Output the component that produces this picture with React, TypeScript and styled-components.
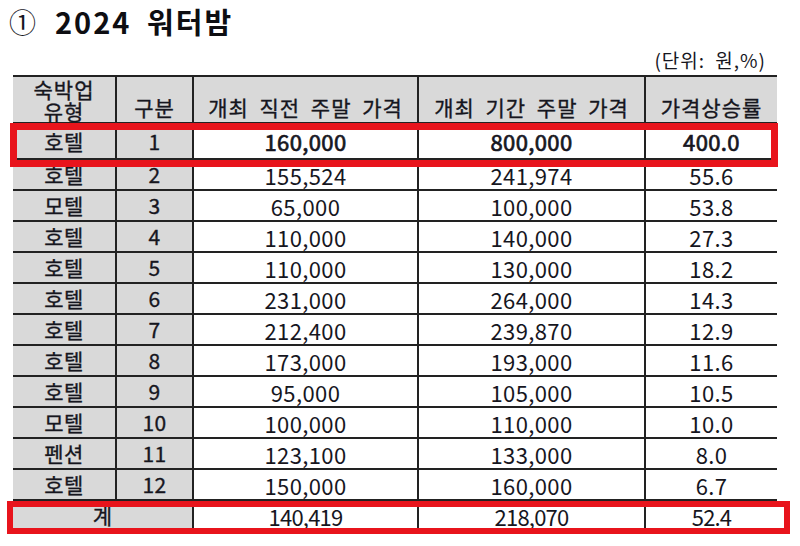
import styled, { createGlobalStyle } from 'styled-components';

const GlobalStyle = createGlobalStyle`
  html, body {
    margin: 0;
    padding: 0;
    background: #ffffff;
  }
  body {
    font-family: "Noto Sans CJK KR", "Noto Sans", sans-serif;
    color: #16161e;
  }
`;

const Page = styled.div`
  width: 800px;
  height: 546px;
  overflow: hidden;
`;

const TitleRow = styled.div`
  height: 42px;
  padding-left: 9px;
  display: flex;
  align-items: center;
  gap: 19px;
`;

const Circled = styled.span`
  font-size: 27px;
  font-weight: 400;
  line-height: 1;
`;

const TitleText = styled.h1`
  margin: 0;
  font-size: 29px;
  font-weight: 700;
  line-height: 1;
  letter-spacing: 2px;
  word-spacing: 7px;
  color: #0e0e12;
`;

const Unit = styled.div`
  height: 33px;
  box-sizing: border-box;
  padding: 7px 34px 0 0;
  text-align: right;
  font-size: 19px;
  line-height: 22px;
  word-spacing: 5px;
  letter-spacing: 1px;
`;

const TableWrap = styled.div`
  position: relative;
  margin-left: 13px;
  width: 764px;
`;

const Table = styled.table`
  width: 764px;
  border-collapse: collapse;
  table-layout: fixed;
  border-top: 2px solid #222;
`;

const HeadRow = styled.tr`
  height: 47px;
`;

const HeadCell = styled.th<{ $stacked?: boolean }>`
  padding: ${p => (p.$stacked ? '1px 0 0' : '0 0 5px')};
  background: #d9d9d9;
  font-size: 21px;
  font-weight: 400;
  -webkit-text-stroke: 0.35px currentColor;
  line-height: ${p => (p.$stacked ? 22 : 20)}px;
  letter-spacing: 1px;
  word-spacing: 5px;
  text-align: center;
  vertical-align: bottom;
  border-bottom: 2px solid #222;
  border-left: 2px solid #222;

  &:first-child {
    border-left: none;
  }
`;

const Row = styled.tr<{ $tall?: boolean }>`
  height: ${p => (p.$tall ? 36 : 31)}px;
`;

const Cell = styled.td<{ $shade?: boolean; $strong?: boolean; $tight?: boolean }>`
  padding: 0;
  background: ${p => (p.$shade ? '#d9d9d9' : '#ffffff')};
  font-size: ${p => (p.$shade ? 21 : 22)}px;
  font-weight: 400;
  -webkit-text-stroke: ${p => (p.$strong ? '0.7px currentColor' : p.$shade ? '0.35px currentColor' : '0')};
  letter-spacing: ${p => (p.$tight ? '-0.8px' : '0.4px')};
  line-height: 1;
  text-align: center;
  vertical-align: middle;
  border-bottom: 2px solid #222;
  border-left: 2px solid #222;

  &:first-child {
    border-left: none;
  }
`;

const Highlight = styled.div<{ $top: number; $left: number; $width: number; $height: number; $edge: number }>`
  position: absolute;
  top: ${p => p.$top}px;
  left: ${p => p.$left}px;
  width: ${p => p.$width}px;
  height: ${p => p.$height}px;
  box-sizing: border-box;
  border: ${p => p.$edge}px solid #e8141c;
  pointer-events: none;
`;

const rows: [string, string, string, string, string][] = [
  ['호텔', '1', '160,000', '800,000', '400.0'],
  ['호텔', '2', '155,524', '241,974', '55.6'],
  ['모텔', '3', '65,000', '100,000', '53.8'],
  ['호텔', '4', '110,000', '140,000', '27.3'],
  ['호텔', '5', '110,000', '130,000', '18.2'],
  ['호텔', '6', '231,000', '264,000', '14.3'],
  ['호텔', '7', '212,400', '239,870', '12.9'],
  ['호텔', '8', '173,000', '193,000', '11.6'],
  ['호텔', '9', '95,000', '105,000', '10.5'],
  ['모텔', '10', '100,000', '110,000', '10.0'],
  ['펜션', '11', '123,100', '133,000', '8.0'],
  ['호텔', '12', '150,000', '160,000', '6.7'],
];

export default function App() {
  return (
    <Page>
      <GlobalStyle />
      <TitleRow>
        <Circled>①</Circled>
        <TitleText>2024 워터밤</TitleText>
      </TitleRow>
      <Unit>(단위: 원,%)</Unit>
      <TableWrap>
        <Table>
          <colgroup>
            <col style={{ width: 103 }} />
            <col style={{ width: 77 }} />
            <col style={{ width: 225 }} />
            <col style={{ width: 227 }} />
            <col style={{ width: 132 }} />
          </colgroup>
          <thead>
            <HeadRow>
              <HeadCell $stacked>
                숙박업
                <br />
                유형
              </HeadCell>
              <HeadCell>구분</HeadCell>
              <HeadCell>개최 직전 주말 가격</HeadCell>
              <HeadCell>개최 기간 주말 가격</HeadCell>
              <HeadCell>가격상승률</HeadCell>
            </HeadRow>
          </thead>
          <tbody>
            {rows.map((r, i) => (
              <Row key={r[1]} $tall={i === 0}>
                <Cell $shade>{r[0]}</Cell>
                <Cell $shade>{r[1]}</Cell>
                <Cell $strong={i === 0}>{r[2]}</Cell>
                <Cell $strong={i === 0}>{r[3]}</Cell>
                <Cell $strong={i === 0}>{r[4]}</Cell>
              </Row>
            ))}
            <Row>
              <Cell $shade colSpan={2}>
                계
              </Cell>
              <Cell $tight>140,419</Cell>
              <Cell $tight>218,070</Cell>
              <Cell $tight>52.4</Cell>
            </Row>
          </tbody>
        </Table>
        <Highlight $top={48} $left={-3} $width={768} $height={44} $edge={7} />
        <Highlight $top={426} $left={-6} $width={783} $height={33} $edge={6} />
      </TableWrap>
    </Page>
  );
}
